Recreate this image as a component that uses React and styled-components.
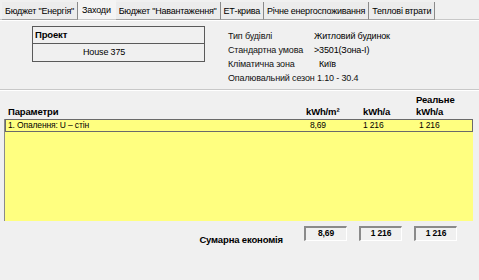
import React from 'react';
import styled, { createGlobalStyle } from 'styled-components';

const GlobalStyle = createGlobalStyle`
  body {
    margin: 0;
    background: #f0f0f0;
    font-family: "Liberation Sans", Arial, sans-serif;
    font-size: 9px;
    letter-spacing: -0.15px;
    color: #000;
  }
`;

const Page = styled.div`
  width: 479px;
  height: 280px;
  background: #f0f0f0;
  overflow: hidden;
`;

const TabBar = styled.div`
  display: flex;
  height: 19px;
  padding-left: 2px;
  border-bottom: 1px solid #c8c8c8;
  box-shadow: 0 1px 0 #ffffff;
`;

const Tab = styled.div`
  display: flex;
  align-items: center;
  padding: 0 ${p => (p.$active ? '4px' : '3px')};
  height: ${p => (p.$active ? '19px' : '17px')};
  margin-top: ${p => (p.$active ? '0' : '2px')};
  border-right: 1px solid ${p => (p.$active ? 'transparent' : '#8a8a8a')};
  border-bottom: ${p => (p.$active ? 'none' : '1px solid #a0a0a0')};
  background: ${p => (p.$active ? '#f4f4f4' : '#ececec')};
  white-space: nowrap;
  font-size: 9px;
  letter-spacing: -0.22px;
`;

const TopSection = styled.div`
  display: flex;
  align-items: flex-start;
  height: 70px;
  padding: 6px 0 0 32px;
  box-sizing: border-box;
  border-bottom: 1px solid #c8c8c8;
  box-shadow: 0 1px 0 #ffffff;
`;

const ProjectBox = styled.div`
  width: 171px;
  border: 1px solid #5a5a5a;
  background: #f0f0f0;
`;

const ProjectHead = styled.div`
  height: 16px;
  line-height: 16px;
  padding-left: 2px;
  font-weight: bold;
  font-size: 9.5px;
  border-bottom: 1px solid #5a5a5a;
`;

const ProjectName = styled.div`
  height: 17px;
  line-height: 17px;
  padding-left: 50px;
`;

const InfoGrid = styled.div`
  display: grid;
  grid-template-columns: 86px auto;
  grid-auto-rows: 14px;
  align-items: center;
  margin: 3px 0 0 23px;
`;

const InfoLabel = styled.div`
  color: #111;
  white-space: nowrap;
  grid-column: ${p => (p.$wide ? '1 / 3' : 'auto')};
`;

const InfoValue = styled.div`
  padding-left: ${p => p.$shift || 0}px;
  white-space: nowrap;
`;

const Cols = styled.div`
  display: grid;
  grid-template-columns: 302px 55px 55px 55px;
  margin-left: 4px;
  width: 467px;
`;

const HeaderRow = styled(Cols)`
  height: 29px;
  align-items: end;
  padding-bottom: 1px;
  box-sizing: border-box;
  font-weight: bold;
  font-size: 9.5px;
`;

const HeadCell = styled.div`
  padding-left: ${p => p.$pad || 0}px;
  line-height: 12px;
`;

const YellowArea = styled.div`
  margin-left: 4px;
  width: 468px;
  height: 102px;
  background: #ffff80;
  border-left: 1px solid #8a8a8a;
`;

const ItemRow = styled(Cols)`
  margin-left: 0;
  width: 466px;
  height: 11px;
  line-height: 11px;
  border: 1px solid #6a6a6a;
  font-size: 8.5px;
`;

const ItemCell = styled.div`
  padding-left: ${p => p.$pad || 0}px;
  white-space: nowrap;
`;

const SummaryRow = styled(Cols)`
  margin-top: 5px;
  align-items: start;
`;

const SummaryLabel = styled.div`
  text-align: right;
  padding: 8px 23px 0 0;
  font-weight: bold;
  font-size: 9.5px;
`;

const SumBox = styled.div`
  width: 43px;
  height: 15px;
  margin-left: -2px;
  box-sizing: border-box;
  border-top: 2px solid #8a8a8a;
  border-left: 2px solid #8a8a8a;
  border-right: 1px solid #ffffff;
  border-bottom: 1px solid #ffffff;
  text-align: center;
  font-weight: bold;
  font-size: 8.5px;
  line-height: 11px;
`;

const tabs = [
  'Бюджет "Енергія"',
  'Заходи',
  'Бюджет "Навантаження"',
  'ЕТ-крива',
  'Річне енергоспоживання',
  'Теплові втрати',
];

const App = () => {
  return (
    <Page>
      <GlobalStyle />
      <TabBar>
        {tabs.map((t, i) => (
          <Tab key={t} $active={i === 1}>{t}</Tab>
        ))}
      </TabBar>
      <TopSection>
        <ProjectBox>
          <ProjectHead>Проект</ProjectHead>
          <ProjectName>House 375</ProjectName>
        </ProjectBox>
        <InfoGrid>
          <InfoLabel>Тип будівлі</InfoLabel>
          <InfoValue>Житловий будинок</InfoValue>
          <InfoLabel>Стандартна умова</InfoLabel>
          <InfoValue>&gt;3501(Зона-I)</InfoValue>
          <InfoLabel>Кліматична зона</InfoLabel>
          <InfoValue $shift={5}>Київ</InfoValue>
          <InfoLabel $wide>Опалювальний сезон 1.10 - 30.4</InfoLabel>
        </InfoGrid>
      </TopSection>
      <HeaderRow>
        <HeadCell $pad={4}>Параметри</HeadCell>
        <HeadCell>kWh/m²</HeadCell>
        <HeadCell $pad={2}>kWh/a</HeadCell>
        <HeadCell>Реальне<br />kWh/a</HeadCell>
      </HeaderRow>
      <YellowArea>
        <ItemRow>
          <ItemCell $pad={2}>1. Опалення: U – стін</ItemCell>
          <ItemCell $pad={2}>8,69</ItemCell>
          <ItemCell>1 216</ItemCell>
          <ItemCell $pad={1}>1 216</ItemCell>
        </ItemRow>
      </YellowArea>
      <SummaryRow>
        <SummaryLabel>Сумарна економія</SummaryLabel>
        <SumBox>8,69</SumBox>
        <SumBox>1 216</SumBox>
        <SumBox>1 216</SumBox>
      </SummaryRow>
    </Page>
  );
};

export default App;
